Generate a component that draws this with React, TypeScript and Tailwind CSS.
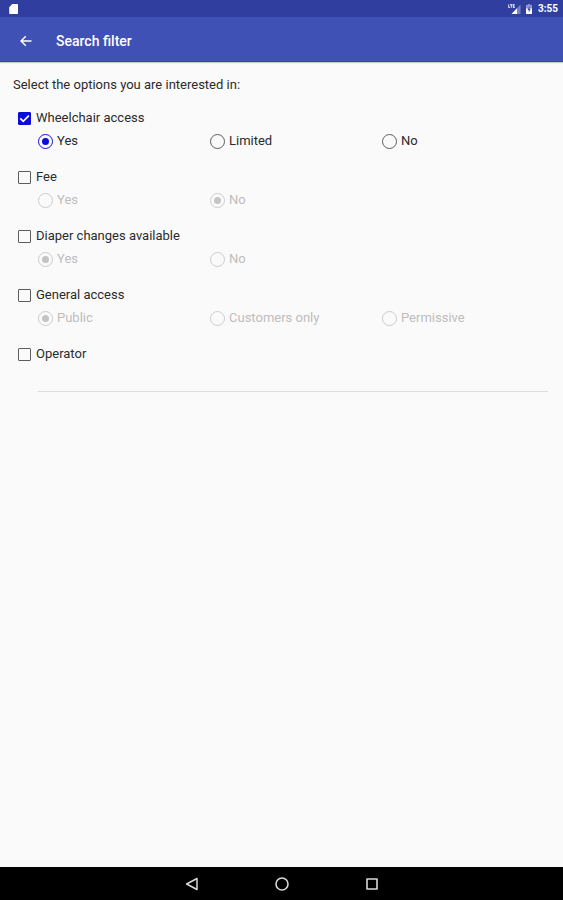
import { useState } from "react";

type Group = {
  id: string;
  label: string;
  options: string[];
  selected: string;
};

const groups: Group[] = [
  { id: "wheelchair", label: "Wheelchair access", options: ["Yes", "Limited", "No"], selected: "Yes" },
  { id: "fee", label: "Fee", options: ["Yes", "No"], selected: "No" },
  { id: "diaper", label: "Diaper changes available", options: ["Yes", "No"], selected: "Yes" },
  { id: "access", label: "General access", options: ["Public", "Customers only", "Permissive"], selected: "Public" },
];

function FilterCheckbox({
  label,
  checked,
  onChange,
}: {
  label: string;
  checked: boolean;
  onChange: (value: boolean) => void;
}) {
  return (
    <label className="flex h-[22px] w-fit items-center gap-[5px] pl-[18px]">
      <span className="grid size-[13px] place-items-center">
        <input
          type="checkbox"
          checked={checked}
          onChange={(e) => onChange(e.target.checked)}
          className="col-start-1 row-start-1 size-[13px] appearance-none rounded-[1px] border border-[#5c5c5c] checked:border-[#0b0bd8] checked:bg-[#0b0bd8]"
        />
        {checked && (
          <svg
            viewBox="0 0 13 13"
            className="pointer-events-none col-start-1 row-start-1 size-[13px]"
            fill="none"
            stroke="#fff"
            strokeWidth="1.6"
            aria-hidden="true"
          >
            <path d="M2.3 6.4 5.2 9.3 10.9 3.6" />
          </svg>
        )}
      </span>
      <span>{label}</span>
    </label>
  );
}

function FilterGroup({ group, initiallyOn }: { group: Group; initiallyOn: boolean }) {
  const [on, setOn] = useState(initiallyOn);
  const [selected, setSelected] = useState(group.selected);

  return (
    <section className="pb-[13px]">
      <FilterCheckbox label={group.label} checked={on} onChange={setOn} />
      <div className="grid grid-cols-3 pr-[9px] pl-[38px]">
        {group.options.map((option) => (
          <label
            key={option}
            className="flex h-6 items-center gap-1 has-disabled:text-[#bdbdbd]"
          >
            <input
              type="radio"
              name={group.id}
              disabled={!on}
              checked={selected === option}
              onChange={() => setSelected(option)}
              className="grid size-[15px] appearance-none place-items-center rounded-full border border-[#5c5c5c] before:size-[7px] before:rounded-full checked:border-[#1212dc] checked:before:bg-[#0b0bd8] disabled:border-[#cccccc] disabled:checked:border-[#cccccc] disabled:checked:before:bg-[#c4c4c4]"
            />
            <span>{option}</span>
          </label>
        ))}
      </div>
    </section>
  );
}

function StatusBar() {
  return (
    <div className="flex h-[17px] items-center bg-[#303f9f] pt-px pr-[5px] pl-2 text-white">
      <svg viewBox="0 0 11 12" className="h-3 w-[11px]" fill="#fff" aria-hidden="true">
        <path d="M4.3 1H9.2Q10 1 10 1.8V10.2Q10 11 9.2 11H2Q1.2 11 1.2 10.2V4.2Z" />
      </svg>
      <div className="ml-auto flex items-center">
        <svg viewBox="0 0 13 12" className="h-3 w-[13px]" aria-hidden="true">
          <path d="M12.5 1.5V11H3.5Z" fill="#fff" fillOpacity="0.35" />
          <path d="M9 5.2V11H3.5Z" fill="#fff" />
          <path d="M.7 1.5V4.5H2M2 1.7H4.6M3.3 1.7V4.7M6.8 1.7H5.3V4.5H6.8M5.3 3.1H6.6" fill="none" stroke="#fff" strokeWidth=".9" />
        </svg>
        <svg viewBox="0 0 8 12" className="ml-1 h-3 w-2" aria-hidden="true">
          <path d="M2.8 1H5.2V2H7V11H1V2H2.8Z" fill="#fff" fillOpacity="0.45" />
          <path d="M1 5.5H7V11H1Z" fill="#fff" />
          <path d="M4.5 3.2 2.5 7H3.8V9.6L5.6 6.1H4.5Z" fill="#303f9f" />
        </svg>
        <span className="ml-[5px] text-[10px] leading-4 font-bold">3:55</span>
      </div>
    </div>
  );
}

export default function App() {
  const [operatorOn, setOperatorOn] = useState(false);
  const [operator, setOperator] = useState("");

  return (
    <div className="flex min-h-screen flex-col bg-[#fafafa] font-[Roboto,sans-serif] text-[13px] leading-5 text-[#2b2b2b]">
      <StatusBar />
      <header className="flex h-[45px] items-center border-b border-[#3545a5] bg-[#3f51b5] pt-[3px] pl-[18px] text-white shadow-[0_1px_1px_rgba(0,0,0,0.2)]">
        <button type="button" aria-label="Back" className="grid size-4 place-items-center">
          <svg viewBox="0 0 16 16" className="size-4" fill="none" stroke="#fff" strokeWidth="1.4" aria-hidden="true">
            <path d="M13.5 8H3.2M7.8 3.2 3 8 7.8 12.8" />
          </svg>
        </button>
        <h1 className="ml-[22px] text-[14px] font-medium">Search filter</h1>
      </header>

      <main className="flex-1">
        <p className="px-[13px] pt-[13px] pb-3">Select the options you are interested in:</p>
        {groups.map((group) => (
          <FilterGroup key={group.id} group={group} initiallyOn={group.id === "wheelchair"} />
        ))}
        <FilterCheckbox label="Operator" checked={operatorOn} onChange={setOperatorOn} />
        <div className="flex pr-[15px] pl-[38px]">
          <input
            type="text"
            aria-label="Operator"
            value={operator}
            disabled={!operatorOn}
            onChange={(e) => setOperator(e.target.value)}
            className="h-[27px] w-full border-b border-[#dedede] bg-transparent outline-none"
          />
        </div>
      </main>

      <nav className="flex h-[33px] items-center justify-center gap-[74px] bg-black">
        <button type="button" aria-label="Back" className="size-4">
          <svg viewBox="0 0 16 16" className="size-4" fill="none" stroke="#d8d8d8" strokeWidth="1.5" strokeLinejoin="round" aria-hidden="true">
            <path d="M13 2.5V13.5L2.6 8Z" />
          </svg>
        </button>
        <button type="button" aria-label="Home" className="size-4">
          <svg viewBox="0 0 16 16" className="size-4" fill="none" stroke="#d8d8d8" strokeWidth="1.6" aria-hidden="true">
            <circle cx="8" cy="8" r="6" />
          </svg>
        </button>
        <button type="button" aria-label="Overview" className="size-4">
          <svg viewBox="0 0 16 16" className="size-4" fill="none" stroke="#d8d8d8" strokeWidth="1.6" strokeLinejoin="round" aria-hidden="true">
            <path d="M3 3H13V13H3Z" />
          </svg>
        </button>
      </nav>
    </div>
  );
}
